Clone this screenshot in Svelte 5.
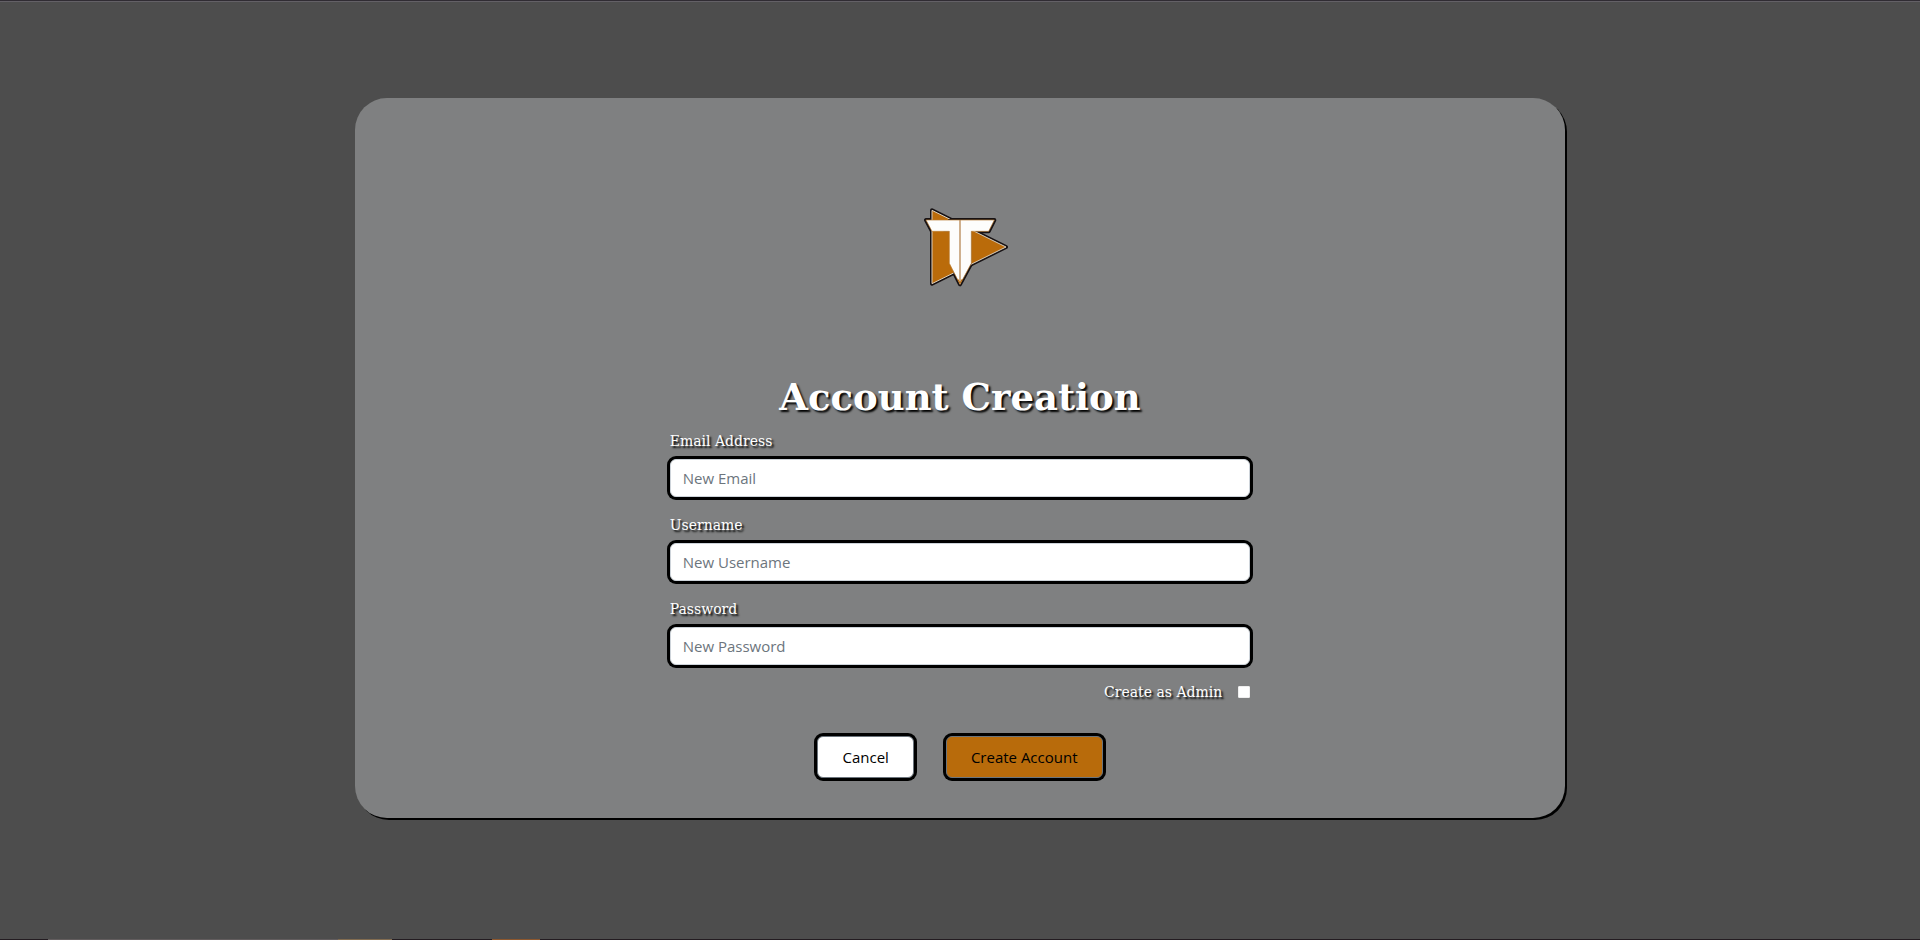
<script>
  const fields = [
    { id: 'email', label: 'Email Address', hint: 'New Email', type: 'email' },
    { id: 'username', label: 'Username', hint: 'New Username', type: 'text' },
    { id: 'password', label: 'Password', hint: 'New Password', type: 'password' }
  ];
</script>

<div class="page">
  <main class="card">
    <svg class="logo" viewBox="0 0 330 300" aria-hidden="true">
      <g stroke="#171214" stroke-width="12" stroke-linejoin="round" fill="#171214">
        <path d="M66 46 L288 156 L66 266Z" />
        <path d="M48 75H253L236 109H184V205L150 268L118 205V109H66Z" />
      </g>
      <path d="M66 46 L288 156 L66 266Z" fill="#ba6b0a" stroke="#d9cdbd" stroke-width="3" stroke-linejoin="round" />
      <path d="M115 72H253L236 109H202L184 101V207L150 268L131 236V109H100Z" fill="#171214" />
      <path d="M48 75H253L236 109H184V205L150 268L118 205V109H66Z" fill="#fdfdfc" stroke="#bd7d32" stroke-width="2" />
      <path d="M150 75V268" stroke="#b98a58" stroke-width="4" />
      <path d="M143 252L150 264L157 252" fill="none" stroke="#ba6b0a" stroke-width="3" />
    </svg>
    <h1>Account Creation</h1>
    <form onsubmit={(e) => e.preventDefault()}>
      {#each fields as f}
        <div class="field">
          <label for={f.id}>{f.label}</label>
          <input id={f.id} type={f.type} placeholder={f.hint} />
        </div>
      {/each}
      <div class="admin">
        <label for="admin">Create as Admin</label>
        <input id="admin" type="checkbox" />
      </div>
      <div class="actions">
        <button type="button">Cancel</button>
        <button class="primary" type="submit">Create Account</button>
      </div>
    </form>
  </main>
  <div class="strip" aria-hidden="true"></div>
</div>

<style>
  :global(body) { margin: 0; background: #4d4d4d; }
  .page {
    box-sizing: border-box;
    min-height: 100vh;
    padding-top: 97px;
    display: flex;
    flex-direction: column;
    align-items: center;
    background: #4d4d4d;
    border-top: 1px solid #302c33;
    box-shadow: inset 0 1px #636066;
  }
  .card {
    box-sizing: border-box;
    width: 63%;
    padding: 97px 0 40px;
    display: flex;
    flex-direction: column;
    align-items: center;
    background: #7f8081;
    border-radius: 32px;
    box-shadow: 2px 2px #000;
  }
  .logo { width: 110px; height: 100px; margin-left: 10px; }
  h1 {
    margin: 78px 0 8px;
    color: #fff;
    font: bold 37px/48px Georgia, "DejaVu Serif", serif;
    text-shadow: 2px 2px 2px #000;
  }
  form { width: 48%; }
  label {
    display: block;
    color: #fff;
    font: 14px/24px Georgia, "DejaVu Serif", serif;
    text-shadow: 2px 2px 2px #000;
  }
  .field { margin-bottom: 16px; }
  .field:nth-child(3) { margin-bottom: 15px; }
  .field label { margin-bottom: 6px; }
  .field input {
    box-sizing: border-box;
    display: block;
    width: 100%;
    height: 38px;
    padding: 6px 12px;
    border: 1px solid #ced4da;
    border-radius: 6px;
    box-shadow: 0 0 0 3px #000;
    background: #fff;
    color: #212529;
    font: 15px/24px "Open Sans", sans-serif;
  }
  .field input::placeholder { color: #6c757d; opacity: 1; }
  .admin { display: flex; justify-content: flex-end; align-items: center; gap: 16px; }
  .admin input {
    appearance: none;
    box-sizing: border-box;
    width: 12px;
    height: 12px;
    margin: 0;
    border: 1px solid #eee;
    border-radius: 1px;
    background: #fff;
  }
  .actions { display: flex; justify-content: center; gap: 32px; margin-top: 32px; }
  button {
    height: 42px;
    padding: 0 24px;
    border: 1px solid #6c757d;
    border-radius: 6px;
    box-shadow: 0 0 0 3px #000;
    background: #fff;
    color: #000;
    font: 15px/24px "Open Sans", sans-serif;
  }
  .primary { background: #b86b0b; }
  .strip {
    align-self: stretch;
    height: 1px;
    margin-top: auto;
    background: linear-gradient(90deg, #231c21 48px, #625d5e 48px 338px, #826c50 338px 392px, #231c21 392px 492px, #8d572d 492px 540px, #231c21 540px);
  }
</style>
